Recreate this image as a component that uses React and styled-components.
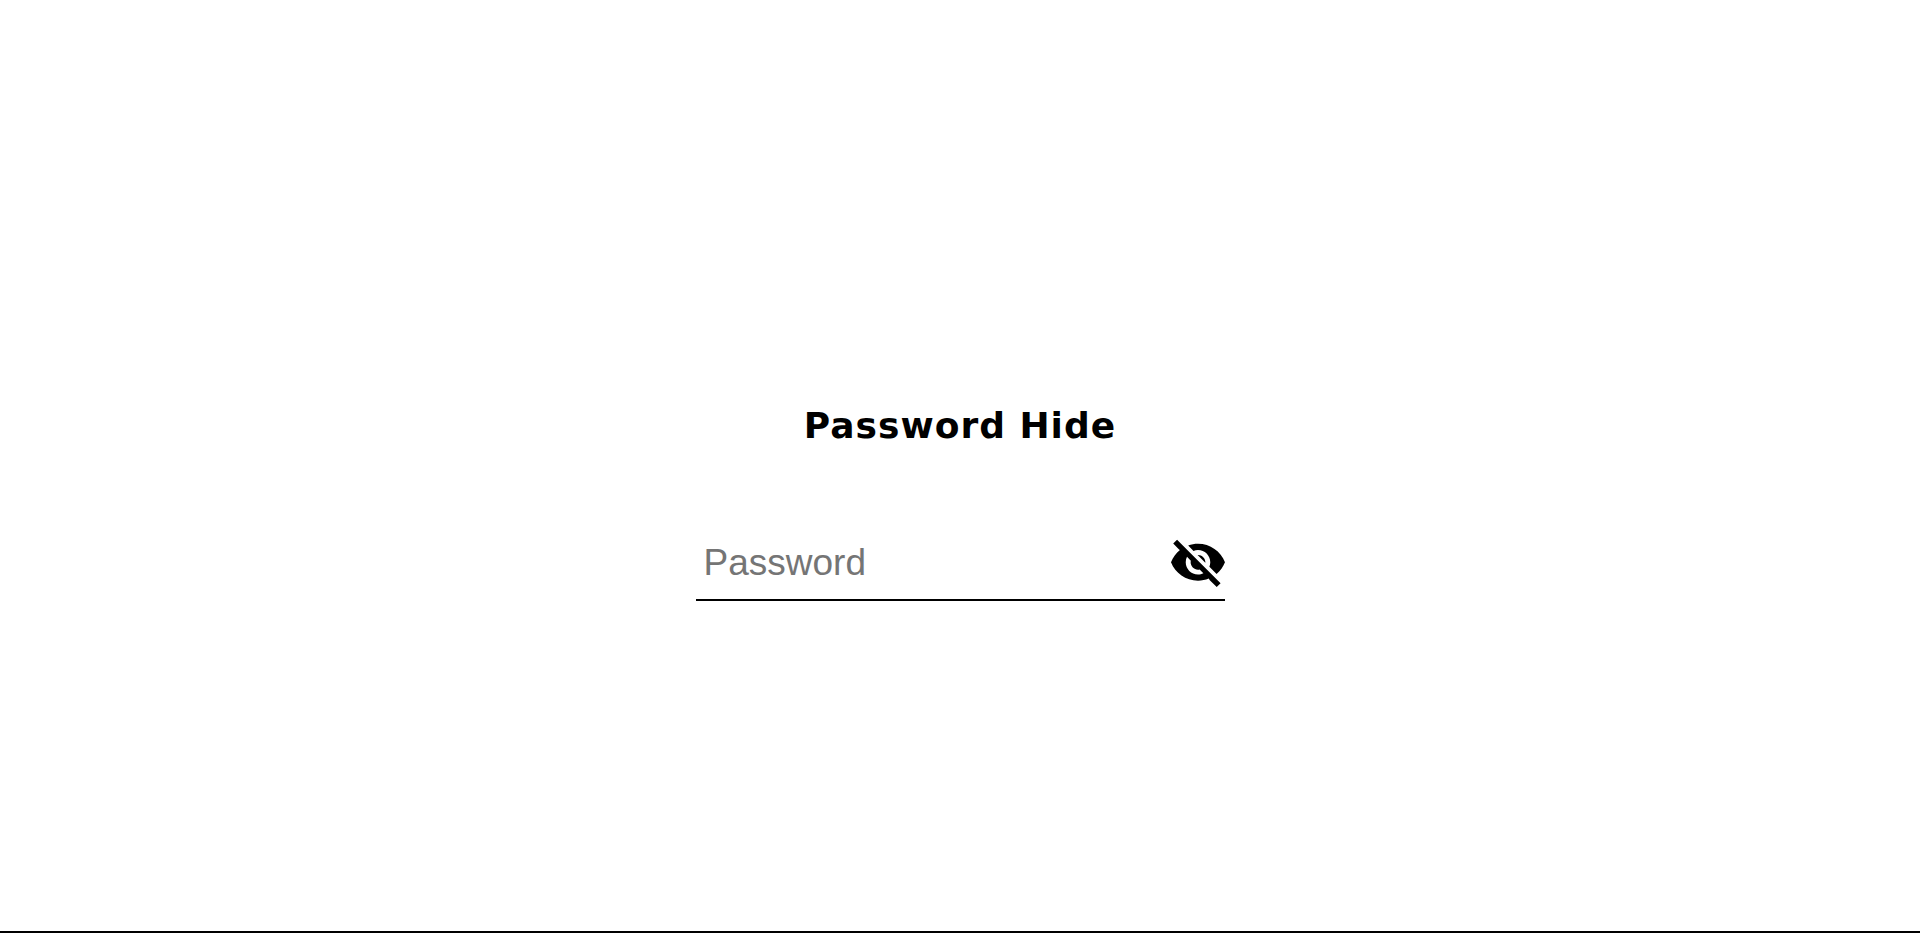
import React, { useState } from "react";
import styled, { createGlobalStyle } from "styled-components";

const GlobalStyle = createGlobalStyle`
  *, *::before, *::after { box-sizing: border-box; }
  body { margin: 0; background: #fff; }
`;

const Page = styled.main`
  min-height: 100vh;
  display: flex;
  flex-direction: column;
  align-items: center;
  justify-content: center;
  gap: 78px;
  padding-top: 73px;
  border-bottom: 2px solid #000;
`;

const Title = styled.h1`
  margin: 0;
  font: bold 36px/46px "DejaVu Sans", Verdana, sans-serif;
  letter-spacing: 1px;
  color: #000;
`;

const Field = styled.div`
  display: flex;
  align-items: center;
  width: 529px;
  max-width: 100%;
  border-bottom: 2px solid #000;
`;

const PasswordInput = styled.input`
  flex: 1;
  min-width: 0;
  height: 72px;
  padding: 0 8px;
  border: 0;
  outline: 0;
  background: transparent;
  font: 37px "Liberation Sans", Arial, sans-serif;
  color: #000;
  &::placeholder { color: #757575; }
`;

const ToggleButton = styled.button`
  display: flex;
  padding: 0;
  border: 0;
  background: transparent;
  color: #000;
  cursor: pointer;
`;

const EyeIcon = styled.svg`
  width: 54px;
  height: 47px;
  overflow: visible;
  fill: currentColor;
`;

const EYE_OPEN =
  "M12 4.5C7 4.5 2.73 7.61 1 12c1.73 4.39 6 7.5 11 7.5s9.27-3.11 11-7.5c-1.73-4.39-6-7.5-11-7.5zM12 17c-2.76 0-5-2.24-5-5s2.24-5 5-5 5 2.24 5 5-2.24 5-5 5zm0-8c-1.66 0-3 1.34-3 3s1.34 3 3 3 3-1.34 3-3-1.34-3-3-3z";
const EYE_OFF =
  "M12 7c2.76 0 5 2.24 5 5 0 .65-.13 1.26-.36 1.83l2.92 2.92c1.51-1.26 2.7-2.89 3.43-4.75-1.73-4.39-6-7.5-11-7.5-1.4 0-2.74.25-3.98.7l2.16 2.16C10.74 7.13 11.35 7 12 7zM1.9 4.37l2.38 2.38.36.26C3.08 8.3 1.78 10.02 1 12c1.73 4.39 6 7.5 11 7.5 1.55 0 3.03-.3 4.38-.84l.42.62L19.63 22.1 21.2 20.53 3.47 2.8 1.9 4.37zM7.53 9.8l1.55 1.55c-.05.21-.08.43-.08.65 0 1.66 1.34 3 3 3 .22 0 .44-.03.65-.08l1.55 1.55c-.67.33-1.41.53-2.2.53-2.76 0-5-2.24-5-5 0-.79.2-1.53.53-2.2zm4.31-.78l3.15 3.15.02-.16c0-1.66-1.34-3-3-3l-.17.01z";

export default function App() {
  const [visible, setVisible] = useState(false);
  return (
    <>
      <GlobalStyle />
      <Page>
        <Title>Password Hide</Title>
        <Field>
          <PasswordInput
            type={visible ? "text" : "password"}
            placeholder="Password"
            aria-label="Password"
          />
          <ToggleButton
            type="button"
            aria-label={visible ? "Hide password" : "Show password"}
            onClick={() => setVisible(!visible)}
          >
            <EyeIcon viewBox="1 3 22 19" aria-hidden="true">
              <path d={visible ? EYE_OPEN : EYE_OFF} />
            </EyeIcon>
          </ToggleButton>
        </Field>
      </Page>
    </>
  );
}
